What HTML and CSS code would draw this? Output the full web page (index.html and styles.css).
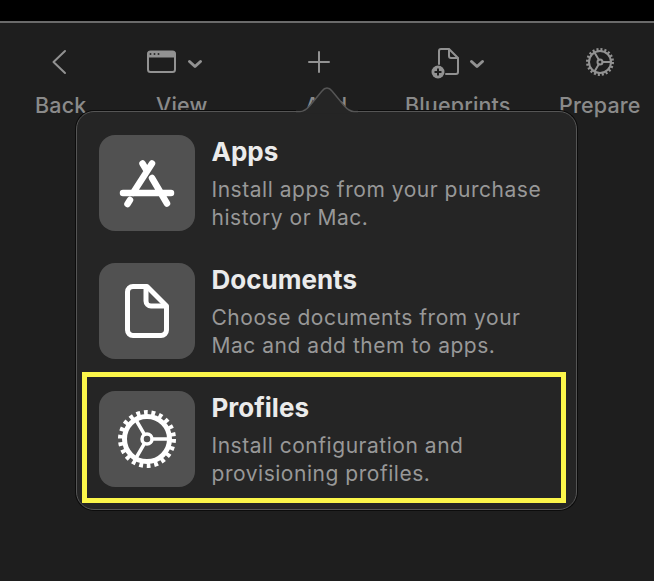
FILE: index.html
```
<!DOCTYPE html>
<html lang="en">
<head>
<meta charset="utf-8">
<title>Add menu</title>
<link rel="stylesheet" href="styles.css">
</head>
<body>
<div class="window">
  <div class="topbar"></div>
  <nav class="toolbar">
    <div class="tool tool-back">
      <svg class="tool-icon" width="51" height="28" viewBox="0 0 51 28"><path d="M30 4 L18.500 15 L30 26" class="line"/></svg>
      <span class="tool-label">Back</span>
    </div>
    <div class="tool tool-view">
      <svg class="tool-icon" width="60" height="28" viewBox="0 0 60 28">
        <rect x="3" y="4.500" width="27" height="20.500" rx="2.500" class="line-thin"/>
        <path d="M3 10 V6.500 a2 2 0 0 1 2-2 H28 a2 2 0 0 1 2 2 V10 Z" class="fill-bar"/>
        <circle cx="5.500" cy="7" r="1" class="dot"/>
        <circle cx="9.500" cy="7" r="1" class="dot"/>
        <circle cx="13.500" cy="7" r="1" class="dot"/>
        <path d="M44.500 14.500 L50 19.500 L55.500 14.500" class="line-bold"/>
      </svg>
      <span class="tool-label">View</span>
    </div>
    <div class="tool tool-add">
      <svg class="tool-icon" width="50" height="28" viewBox="0 0 50 28"><path d="M21 5 V25 M11 15 H31" class="line"/></svg>
      <span class="tool-label tool-label-add">Add</span>
    </div>
    <div class="tool tool-blueprints">
      <svg class="tool-icon" width="106" height="28" viewBox="0 0 106 28">
        <path d="M34 17 V4 a2 2 0 0 1 2-2 H44 L53 11 V25 a2 2 0 0 1-2 2 H41" class="line-thin"/>
        <path d="M44 2.500 V9 a2 2 0 0 0 2 2 H52.500" class="line-thin"/>
        <circle cx="33" cy="25" r="6.500" class="fill"/>
        <path d="M33 21.500 V28.500 M29.500 25 H36.500" class="cut"/>
        <path d="M66.500 14.500 L72 19.500 L77.500 14.500" class="line-bold"/>
      </svg>
      <span class="tool-label">Blueprints</span>
    </div>
    <div class="tool tool-prepare">
      <svg class="tool-icon" width="81" height="28" viewBox="0 0 81 28">
        <circle cx="41" cy="15" r="11" class="line-thin"/>
        <circle cx="41" cy="15" r="12.500" class="teeth-small"/>
        <circle cx="41" cy="15" r="2.500" class="line-thin"/>
        <path d="M43.500 15 H52 M39.800 12.800 L35.500 5.500 M39.800 17.200 L35.500 24.500" class="line-thin"/>
      </svg>
      <span class="tool-label">Prepare</span>
    </div>
  </nav>

  <div class="popover">
    <svg class="tail" width="62" height="27" viewBox="0 0 62 27">
      <path d="M0 26.500 V24.500 H4 C8 24.500 11 22 14 18.500 L26 4 C29 0 33 0 36 4 L48 18.500 C51 22 54 24.500 58 24.500 H62 V26.500 Z" class="tail-fill"/>
      <path d="M0 24.500 H4 C8 24.500 11 22 14 18.500 L26 4 C29 0 33 0 36 4 L48 18.500 C51 22 54 24.500 58 24.500 H62" class="tail-line"/>
    </svg>
    <div class="row">
      <div class="tile">
        <svg width="96" height="96" viewBox="0 0 96 96">
          <path d="M53 28.500 L34 58 M43.500 28.500 L48 36 M53 43 L68 68.500 M24 58 H72 M28.500 69 L31 65" class="glyph-round"/>
        </svg>
      </div>
      <div class="copy">
        <h3 class="title">Apps</h3>
        <p class="desc">Install apps from your purchase<br>history or Mac.</p>
      </div>
    </div>
    <div class="row">
      <div class="tile">
        <svg width="96" height="96" viewBox="0 0 96 96">
          <path d="M34 23.500 H48 L67.500 43 V67 a5.500 5.500 0 0 1-5.500 5.500 H34 a5.500 5.500 0 0 1-5.500-5.500 V29 a5.500 5.500 0 0 1 5.500-5.500 Z" class="glyph"/>
          <path d="M47 24 V38 a5 5 0 0 0 5 5 H67" class="glyph"/>
        </svg>
      </div>
      <div class="copy">
        <h3 class="title">Documents</h3>
        <p class="desc">Choose documents from your<br>Mac and add them to apps.</p>
      </div>
    </div>
    <div class="row">
      <div class="tile">
        <svg width="96" height="96" viewBox="0 0 96 96">
          <circle cx="48" cy="48" r="22.500" class="glyph"/>
          <circle cx="48" cy="48" r="26" class="teeth-large"/>
          <circle cx="48" cy="48" r="5" class="glyph-hub"/>
          <path d="M53 48 H70 M45.500 43.700 L37 29 M45.500 52.300 L37 67" class="glyph-hub"/>
        </svg>
      </div>
      <div class="copy">
        <h3 class="title">Profiles</h3>
        <p class="desc">Install configuration and<br>provisioning profiles.</p>
      </div>
    </div>
    <div class="highlight"></div>
  </div>
</div>
</body>
</html>
```
FILE: styles.css
```
* { box-sizing: border-box; }
html, body { margin: 0; height: 100%; }
body { background: #1e1e1e; font-family: Inter, "Liberation Sans", sans-serif; overflow: hidden; }
.window { position: relative; width: 654px; height: 581px; }
.topbar { height: 23px; background: #000; border-bottom: 2px solid #6a6a6a; }
.toolbar { display: flex; padding: 24px 0 0 35px; }
.tool { display: flex; flex-direction: column; }
.tool-icon { display: block; margin-bottom: 17px; overflow: visible; }
.tool-label { font-size: 21.500px; font-weight: 500; line-height: 26px; letter-spacing: 0.150px; color: #8a8a8a; white-space: nowrap; }
.tool-label-add { margin-left: 7px; }
.tool-back { width: 51px; margin-right: 70px; }
.tool-view { width: 50px; margin-right: 92px; }
.tool-view .tool-icon { margin-left: -11px; }
.tool-add { width: 50px; margin-right: 57px; }
.tool-blueprints { width: 106px; margin-right: 48px; }
.tool-prepare { width: 81px; }

.line, .line-thin, .line-bold { fill: none; stroke: #929292; stroke-linecap: round; stroke-linejoin: round; }
.line { stroke-width: 2; }
.line-thin { stroke-width: 2; }
.line-bold { stroke-width: 3; }
.fill { fill: #929292; }
.fill-bar { fill: #929292; stroke: #929292; stroke-width: 1; }
.dot { fill: #2a2a2a; }
.cut { fill: none; stroke: #1e1e1e; stroke-width: 2; }
.teeth-small { fill: none; stroke: #929292; stroke-width: 3; stroke-dasharray: 2 1.930; }

.popover {
  position: absolute;
  left: 76px;
  top: 111px;
  width: 501px;
  height: 399px;
  padding: 23px 0 0 22px;
  display: flex;
  flex-direction: column;
  gap: 32px;
  background: #252525;
  border: 1px solid #555;
  border-radius: 18px;
  box-shadow: 0 0 0 1px #0c0c0c;
}
.tail { position: absolute; left: 219px; top: -25px; overflow: visible; }
.tail-fill { fill: #252525; }
.tail-line { fill: none; stroke: #555; stroke-width: 1.500; }
.row { display: flex; gap: 17px; height: 96px; }
.tile { width: 96px; height: 96px; flex: none; background: #515151; border-radius: 16px; }
.tile svg { display: block; }
.copy { padding-top: 2px; margin-left: -0.500px; }
.title { margin: 0; font-size: 26px; font-weight: 700; line-height: 30px; color: #ebebeb; }
.desc { margin: 9px 0 0; font-size: 21px; font-weight: 400; line-height: 28px; letter-spacing: 0.530px; color: #989898; white-space: nowrap; }
.glyph, .glyph-round, .glyph-hub { fill: none; stroke: #fff; stroke-linejoin: round; }
.glyph { stroke-width: 5; }
.glyph-round { stroke-width: 6.500; stroke-linecap: round; }
.glyph-hub { stroke-width: 3.500; }
.teeth-large { fill: none; stroke: #fff; stroke-width: 6; stroke-dasharray: 3.720 3.700; }
.highlight {
  position: absolute;
  left: 5px;
  top: 260px;
  width: 484px;
  height: 131px;
  border: 5px solid #fcf64a;
}
```
